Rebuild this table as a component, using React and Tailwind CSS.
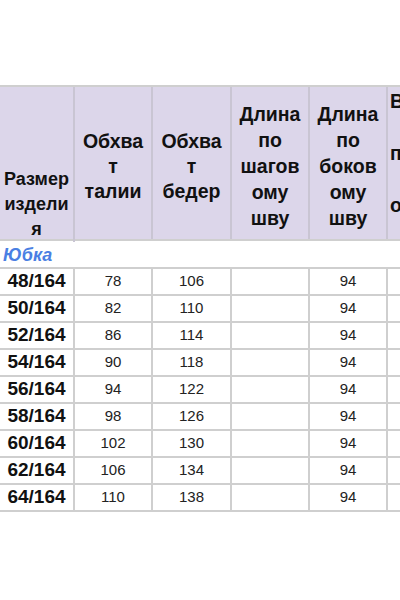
import React from "react";

const cols = ["w-[75px]", "w-[78px]", "w-[79px]", "w-[78px]", "w-[78px]"];

const headers = [
  { lines: ["Размер", "издели", "я"], cls: "justify-end text-[18px] leading-[25px] -mb-[3px]" },
  { lines: ["Обхва", "т", "талии"], cls: "justify-center text-[19.5px] leading-[25px] pt-[7px]" },
  { lines: ["Обхва", "т", "бедер"], cls: "justify-center text-[19.5px] leading-[25px] pt-[7px]" },
  { lines: ["Длина", "по", "шагов", "ому", "шву"], cls: "justify-center text-[19.5px] leading-[26px] pt-[6px]" },
  { lines: ["Длина", "по", "боков", "ому", "шву"], cls: "justify-center text-[19.5px] leading-[26px] pt-[6px]" },
];

const rows = [
  ["48/164", "78", "106", "", "94"],
  ["50/164", "82", "110", "", "94"],
  ["52/164", "86", "114", "", "94"],
  ["54/164", "90", "118", "", "94"],
  ["56/164", "94", "122", "", "94"],
  ["58/164", "98", "126", "", "94"],
  ["60/164", "102", "130", "", "94"],
  ["62/164", "106", "134", "", "94"],
  ["64/164", "110", "138", "", "94"],
];

export default function App() {
  return (
    <div
      className="w-[400px] h-[600px] bg-white overflow-hidden text-[#111]"
      style={{ fontFamily: '"Liberation Sans", Arial, sans-serif' }}
    >
      <div className="h-[85px]" />

      {/* header */}
      <div className="flex h-[156px] bg-[#dcd6ea] border-t-2 border-b-2 border-[#cfcfcf]">
        {headers.map((h, i) => (
          <div
            key={i}
            className={`${cols[i]} shrink-0 flex flex-col items-center ${h.cls} border-r-2 border-[#c9c5d3] font-bold`}
          >
            {h.lines.map((l, j) => (
              <span key={j}>{l}</span>
            ))}
          </div>
        ))}
        <div className="flex-1 min-w-0 overflow-hidden flex flex-col justify-center pt-[6px] pl-[2px] font-bold text-[19.5px] leading-[26px]">
          <span className="break-all">В</span>
          <span className="break-all">&nbsp;</span>
          <span className="break-all">п</span>
          <span className="break-all">&nbsp;</span>
          <span className="break-all">о</span>
          <span className="break-all">&nbsp;</span>
        </div>
      </div>

      {/* section title */}
      <div className="h-[28px] flex items-center pl-[3px] pt-[2px] border-b-2 border-[#cfcfcf]">
        <span className="italic font-bold text-[18px] text-[#4a7fe3]">Юбка</span>
      </div>

      {/* rows */}
      {rows.map((r, i) => (
        <div key={i} className="flex h-[27px] border-b-2 border-[#cfcfcf]">
          {r.map((c, j) => (
            <div
              key={j}
              className={`${cols[j]} shrink-0 flex items-center justify-center border-r-2 border-[#cfcfcf] ${
                j === 0 ? "font-bold text-[19px] text-[#111]" : "text-[15px] text-[#222]"
              }`}
            >
              {c}
            </div>
          ))}
          <div className="flex-1" />
        </div>
      ))}
    </div>
  );
}
